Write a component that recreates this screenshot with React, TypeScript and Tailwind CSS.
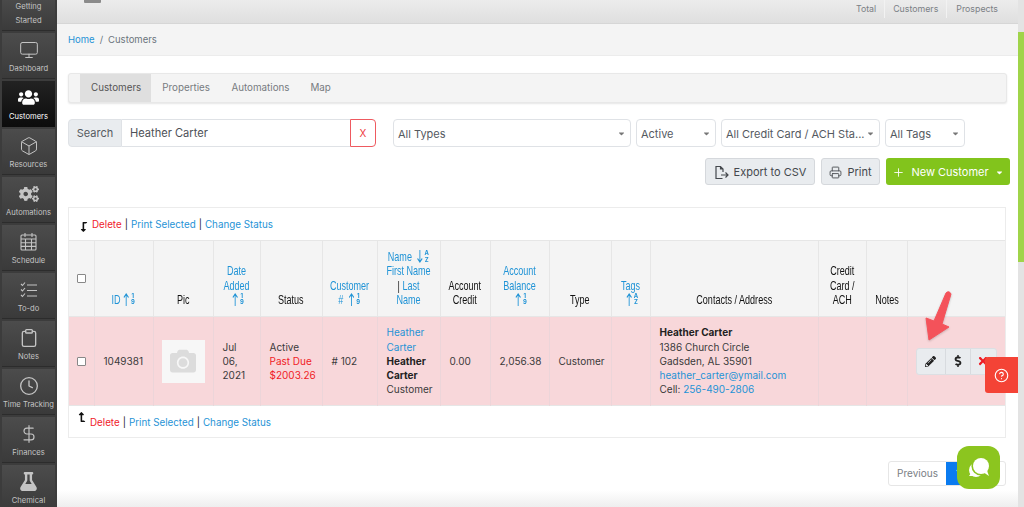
import React from "react";
import { Monitor, Box, Clock, DollarSign, Clipboard, Plus, HelpCircle, Printer } from "lucide-react";
import { FaUsers, FaCogs, FaFlask, FaCamera, FaPencilAlt, FaDollarSign, FaTimes, FaLevelDownAlt, FaLevelUpAlt, FaCaretDown } from "react-icons/fa";

const inter = { fontFamily: "Inter, 'Liberation Sans', sans-serif" };

const CalIcon = () => (
  <svg width="19" height="20" viewBox="0 0 19 20" fill="none" stroke="currentColor" strokeWidth="1.1">
    <rect x="2" y="3" width="15" height="15" rx="1" />
    <path d="M2 7h15M2 10.7h15M2 14.4h15M6.5 7v11M12.5 7v11M6 1v4M13 1v4" />
  </svg>
);
const TodoIcon = () => (
  <svg width="20" height="20" viewBox="0 0 20 20" fill="none" stroke="currentColor" strokeWidth="1.1">
    <path d="M2 4l1.5 1.5L6 2.5M2 9.5L3.5 11 6 8M2 15l1.5 1.5L6 13.5" />
    <path d="M8 5h10M8 10.5h10M8 16h10" />
  </svg>
);

const nav: [string, React.ReactNode][] = [
  ["Dashboard", <Monitor size={20} strokeWidth={1.2} />],
  ["Customers", <FaUsers size={21} />],
  ["Resources", <Box size={20} strokeWidth={1.2} />],
  ["Automations", <FaCogs size={20} />],
  ["Schedule", <CalIcon />],
  ["To-do", <TodoIcon />],
  ["Notes", <Clipboard size={20} strokeWidth={1.6} />],
  ["Time Tracking", <Clock size={20} strokeWidth={1.6} />],
  ["Finances", <DollarSign size={20} strokeWidth={1.4} />],
  ["Chemical", <FaFlask size={19} />],
];

function Sidebar() {
  return (
    <aside className="w-[57px] shrink-0 bg-[#3c3c3c] flex flex-col items-center gap-[2px] overflow-hidden h-[507px]">
      <div className="w-[53px] h-[31px] shrink-0 bg-gradient-to-b from-[#4a4a4a] to-[#3b3b3b] border-b border-[#2c2c2c] text-[#c4c4c4] text-[7.6px] leading-[14px] text-center">
        Getting<br />Started
      </div>
      {nav.map(([label, icon], i) => (
        <div
          key={label}
          className={
            i === 1
              ? "w-[53px] h-[46px] shrink-0 bg-gradient-to-b from-[#222222] to-[#0c0c0c] text-white flex flex-col items-center justify-end pb-[4px] text-[7.6px] leading-[12px]"
              : "w-[53px] h-[46px] shrink-0 bg-gradient-to-b from-[#4c4c4c] to-[#3a3a3a] border-b border-[#2c2c2c] text-[#c4c4c4] flex flex-col items-center justify-end pb-[3px] text-[7.6px] leading-[12px] whitespace-nowrap"
          }
        >
          <span className="h-[21px] flex items-center mb-[3px]">{icon}</span>
          {label}
        </div>
      ))}
    </aside>
  );
}

function Select({ w, label }: { w: string; label: string }) {
  return (
    <div className={`${w} h-[28px] shrink-0 border border-[#dfe2e6] rounded-[4px] bg-white flex items-center justify-between pl-[4px] pr-[4px] text-[#55595f] whitespace-nowrap overflow-hidden`}>
      <span className="pt-[2px]">{label}</span>
      <FaCaretDown size={9} className="text-[#777] shrink-0" />
    </div>
  );
}

function Sort({ top, bottom, down }: { top: string; bottom: string; down?: boolean }) {
  return (
    <span className="inline-flex items-center align-[-2px] ml-[4px]" style={inter}>
      <svg width="9" height="13" viewBox="0 0 9 13" fill="none" stroke="currentColor" strokeWidth="1.3">
        {down ? <path d="M4.5 0v12M1 8.5l3.5 3.5L8 8.5" /> : <path d="M4.5 13V1M1 4.5L4.5 1 8 4.5" />}
      </svg>
      <span className="flex flex-col text-[6.5px] leading-[6.5px] font-bold w-[7px] ml-[2px] scale-x-[1.35]">
        <span>{top}</span>
        <span>{bottom}</span>
      </span>
    </span>
  );
}
const Num = () => <Sort top="1" bottom="9" />;

const Th = ({ children, link, cls = "" }: { children?: React.ReactNode; link?: boolean; cls?: string }) => (
  <th
    className={`border-r border-[#e6e6e6] align-bottom text-center font-normal pb-[9px] text-[13.5px] leading-[14.2px] overflow-hidden ${link ? "text-[#1f93d6]" : "text-[#111]"} ${cls}`}
    style={{ fontFamily: "'Liberation Sans', sans-serif" }}
  >
    <div className="w-[150%] ml-[-25%] scale-x-[0.67] whitespace-nowrap">{children}</div>
  </th>
);

const Td = ({ children, cls = "" }: { children?: React.ReactNode; cls?: string }) => (
  <td className={`border-r border-[#ecd5d9] px-[9px] align-middle ${cls}`}>{children}</td>
);

function BulkLinks() {
  return (
    <div className="flex items-center text-[9.8px] text-[#222]">
      <span className="text-[#f0202a]">Delete</span>
      <span className="mx-[3px]">|</span>
      <span className="text-[#1f93d6]">Print Selected</span>
      <span className="mx-[3px]">|</span>
      <span className="text-[#1f93d6]">Change Status</span>
    </div>
  );
}

export default function App() {
  return (
    <div className="w-[1024px] h-[507px] overflow-hidden flex bg-white relative text-[#3a3a3a]" style={inter}>
      <Sidebar />
      <main className="w-[961px] shrink-0 flex flex-col h-[507px] overflow-hidden">
        <header className="h-[24px] shrink-0 bg-gradient-to-b from-[#ececec] to-[#dfdfdf] border-b border-[#d6d6d6] flex justify-between pl-[27px] pr-[20px] text-[#7b7f85] text-[8.8px]">
          <div className="w-[17px] h-[3px] bg-[#8b8b8b] rounded-b-[1px]" />
          <div className="flex h-[18px] items-center">
            <span className="pr-[8px]">Total</span>
            <span className="border-l border-[#f2f2f2] px-[8px] h-full flex items-center">Customers</span>
            <span className="border-l border-[#f2f2f2] pl-[9px] h-full flex items-center">Prospects</span>
          </div>
        </header>
        <nav className="h-[32px] shrink-0 bg-[#f4f4f4] border-b border-[#ececec] flex items-center pl-[11px] pt-[1px] text-[9.5px] text-[#6c757d]">
          <span className="text-[#1f93d6]">Home</span>
          <span className="mx-[5px]">/</span>
          <span>Customers</span>
        </nav>
        <div className="flex-1 pl-[11px] pr-[11px] pt-[17px] relative">
          {/* tabs */}
          <div className="h-[30px] bg-[#f4f4f4] border border-[#e8e8e8] rounded-[3px] shadow-[0_1px_2px_rgba(0,0,0,0.1)] flex pl-[11px] text-[9.8px] text-[#777b80]">
            <span className="bg-[#dfdfdf] text-[#555] h-full pl-[11px] pr-[10px] flex items-center">Customers</span>
            <span className="px-[11px] flex items-center">Properties</span>
            <span className="px-[10.5px] flex items-center">Automations</span>
            <span className="px-[10.5px] flex items-center">Map</span>
          </div>
          {/* search + filters */}
          <div className="flex mt-[16px] text-[11px]">
            <div className="flex h-[28px] w-[308px] shrink-0">
              <div className="w-[54px] bg-[#e9ecef] border border-[#dfe2e6] rounded-l-[4px] flex items-center justify-center pt-[1px] text-[#555a60]">Search</div>
              <div className="flex-1 border-y border-[#dfe2e6] flex items-center pl-[8px] pt-[1px] text-[#4d5157] text-[11.1px]">Heather Carter</div>
              <div className="w-[26px] border border-[#ee5a60] rounded-r-[4px] flex items-center justify-center text-[#ee3a40] text-[10px]">X</div>
            </div>
            <div className="flex gap-[5px] ml-[17px]">
              <Select w="w-[238px]" label="All Types" />
              <Select w="w-[80px]" label="Active" />
              <Select w="w-[159px]" label="All Credit Card / ACH Sta..." />
              <Select w="w-[80px]" label="All Tags" />
            </div>
          </div>
          {/* actions */}
          <div className="flex justify-end gap-[6px] mt-[11px] mr-[-3px] text-[11px]">
            <button className="w-[110px] h-[27px] bg-[#e9ecef] border border-[#d5d8dc] rounded-[3px] flex items-center justify-center gap-[5px] pt-[1px] text-[#44484d]">
              <svg width="15" height="15" viewBox="0 0 15 15" fill="none" stroke="currentColor" strokeWidth="1.2">
                <path d="M9 7V4L6.5 1.5H2v12h6.5M6.5 1.5V4H9M7 10h7M11.5 7.5L14 10l-2.5 2.5" />
              </svg>
              Export to CSV
            </button>
            <button className="w-[59px] h-[27px] bg-[#e9ecef] border border-[#d5d8dc] rounded-[3px] flex items-center justify-center gap-[5px] pt-[1px] text-[#44484d]">
              <Printer size={13} strokeWidth={1.6} /> Print
            </button>
            <button className="w-[124px] h-[27px] bg-[#82c41c] rounded-[3px] flex items-center justify-center gap-[6px] pt-[1px] text-white">
              <Plus size={13} strokeWidth={1.6} /> New Customer <FaCaretDown size={9} />
            </button>
          </div>
          {/* table card */}
          <section className="mt-[22px] h-[231px] w-[938px] border border-[#ececec] bg-white">
            <div className="h-[32px] flex items-center pl-[10px] pt-[2px] gap-[3px]">
              <FaLevelDownAlt size={10} className="text-[#111] -scale-x-100 mt-[3px]" />
              <BulkLinks />
            </div>
            <table className="w-[936px] table-fixed border-collapse text-[10px] leading-[14.2px]">
              <colgroup>
                <col className="w-[25px]" /><col className="w-[59px]" /><col className="w-[60px]" /><col className="w-[47px]" /><col className="w-[62px]" /><col className="w-[55px]" /><col className="w-[63px]" /><col className="w-[50px]" /><col className="w-[59px]" /><col className="w-[62px]" /><col className="w-[39px]" /><col className="w-[168px]" /><col className="w-[48px]" /><col className="w-[41px]" /><col />
              </colgroup>
              <thead>
                <tr className="h-[76px] bg-[#f4f4f4] border-y border-[#e6e6e6]">
                  <th className="border-r border-[#e6e6e6] align-middle"><span className="block w-[9px] h-[9px] ml-[8px] border border-[#888] rounded-[1px] bg-white" /></th>
                  <Th link>ID<Num /></Th>
                  <Th>Pic</Th>
                  <Th link>Date<br />Added<br /><Num /></Th>
                  <Th>Status</Th>
                  <Th link>Customer<br /># <Num /></Th>
                  <Th link>Name <Sort top="A" bottom="Z" down /><br />First Name<br /><span className="text-[#222]">|</span> Last<br />Name</Th>
                  <Th>Account<br />Credit</Th>
                  <Th link>Account<br />Balance<br /><Num /></Th>
                  <Th>Type</Th>
                  <Th link>Tags<br /><Sort top="A" bottom="Z" /></Th>
                  <Th>Contacts / Address</Th>
                  <Th>Credit<br />Card /<br />ACH</Th>
                  <Th>Notes</Th>
                  <Th cls="border-r-0" />
                </tr>
              </thead>
              <tbody>
                <tr className="h-[89px] bg-[#f8d7da] border-b border-[#e6e6e6]">
                  <td className="border-r border-[#ecd5d9] align-middle"><span className="block w-[9px] h-[9px] ml-[8px] border border-[#888] rounded-[1px] bg-white" /></td>
                  <Td>1049381</Td>
                  <Td>
                    <div className="w-[43px] h-[43px] -ml-[1px] bg-[#f7f7f7] flex items-center justify-center text-[#dcdcdc]"><FaCamera size={26} /></div>
                  </Td>
                  <Td>Jul 06, 2021</Td>
                  <Td>Active<br /><span className="text-[#f01c26]">Past Due<br />$2003.26</span></Td>
                  <Td># 102</Td>
                  <Td><span className="text-[#1f93d6]">Heather Carter</span><br /><b className="text-[#222]">Heather Carter</b><br />Customer</Td>
                  <Td>0.00</Td>
                  <Td>2,056.38</Td>
                  <Td>Customer</Td>
                  <Td />
                  <Td>
                    <b className="text-[#222]">Heather Carter</b><br />1386 Church Circle<br />Gadsden, AL 35901<br />
                    <span className="text-[#1f93d6]">heather_carter@ymail.com</span><br />Cell: <span className="text-[#1f93d6]">256-490-2806</span>
                  </Td>
                  <Td />
                  <Td />
                  <td>
                    <div className="ml-[8px] w-[81px] h-[27px] bg-[#e9ecef] border border-[#dcdfe3] rounded-[3px] flex text-[#222]">
                      <span className="w-[29px] flex items-center justify-center border-r border-[#d8dbdf]"><FaPencilAlt size={11} /></span>
                      <span className="w-[25px] flex items-center justify-center border-r border-[#d8dbdf]"><FaDollarSign size={12} /></span>
                      <span className="flex-1 flex items-center justify-center text-[#ee1c25]"><FaTimes size={12} /></span>
                    </div>
                  </td>
                </tr>
              </tbody>
            </table>
            <div className="flex items-start pl-[8px] pt-[6px] gap-[3px]">
              <FaLevelUpAlt size={10} className="text-[#111] -scale-x-100" />
              <div className="mt-[4px]"><BulkLinks /></div>
            </div>
          </section>
          {/* pagination */}
          <div className="flex justify-end mt-[23px] w-[938px] text-[10px]">
            <div className="h-[25px] w-[118px] flex border border-[#e6e6e6] rounded-[3px] overflow-hidden">
              <span className="w-[57px] flex items-center justify-center text-[#7a7e84]">Previous</span>
              <span className="w-[24px] bg-[#0a7bf0] text-white flex items-center justify-center">1</span>
            </div>
          </div>
          {/* fade at the bottom */}
          <div className="absolute left-0 right-0 top-[434px] h-[17px] bg-gradient-to-b from-transparent to-[#eeeeee]" />
        </div>
      </main>
      {/* right scrollbar strip */}
      <div className="w-[6px] shrink-0 flex flex-col h-[507px] bg-[#e3e3e3]">
        <div className="h-[32px]" />
        <div className="h-[230px] bg-[#a0d44a]" />
      </div>

      {/* overlays */}
      <div className="absolute left-[985px] top-[357px] w-[33px] h-[36px] bg-[#f44336] rounded-l-[3px] flex items-center justify-center text-white">
        <HelpCircle size={15} strokeWidth={1.8} />
      </div>
      <svg className="absolute left-[922px] top-[288px] drop-shadow-[0_1px_1px_rgba(0,0,0,0.2)]" width="36" height="56" viewBox="0 0 36 56">
        <path d="M24 5 Q27 2 29 6 L20 36 L27 39 L7 52 L4 30 L12 33 Z" fill="#f4525a" stroke="#f4525a" strokeWidth="1" strokeLinejoin="round" />
      </svg>
      <div className="absolute left-[957px] top-[446px] w-[43px] h-[43px] rounded-[12px] bg-[#8cc51f] flex items-center justify-center">
        <svg width="26" height="26" viewBox="0 0 26 26">
          <circle cx="10" cy="15" r="7" fill="#ffffff" />
          <path d="M3 21 L7 15 L10 21 Z" fill="#ffffff" />
          <circle cx="15" cy="11" r="9.6" fill="#8cc51f" />
          <circle cx="15" cy="11" r="8" fill="#ffffff" />
          <path d="M17 17 L23 21 Q21 17 21 13 Z" fill="#ffffff" />
        </svg>
      </div>
    </div>
  );
}
